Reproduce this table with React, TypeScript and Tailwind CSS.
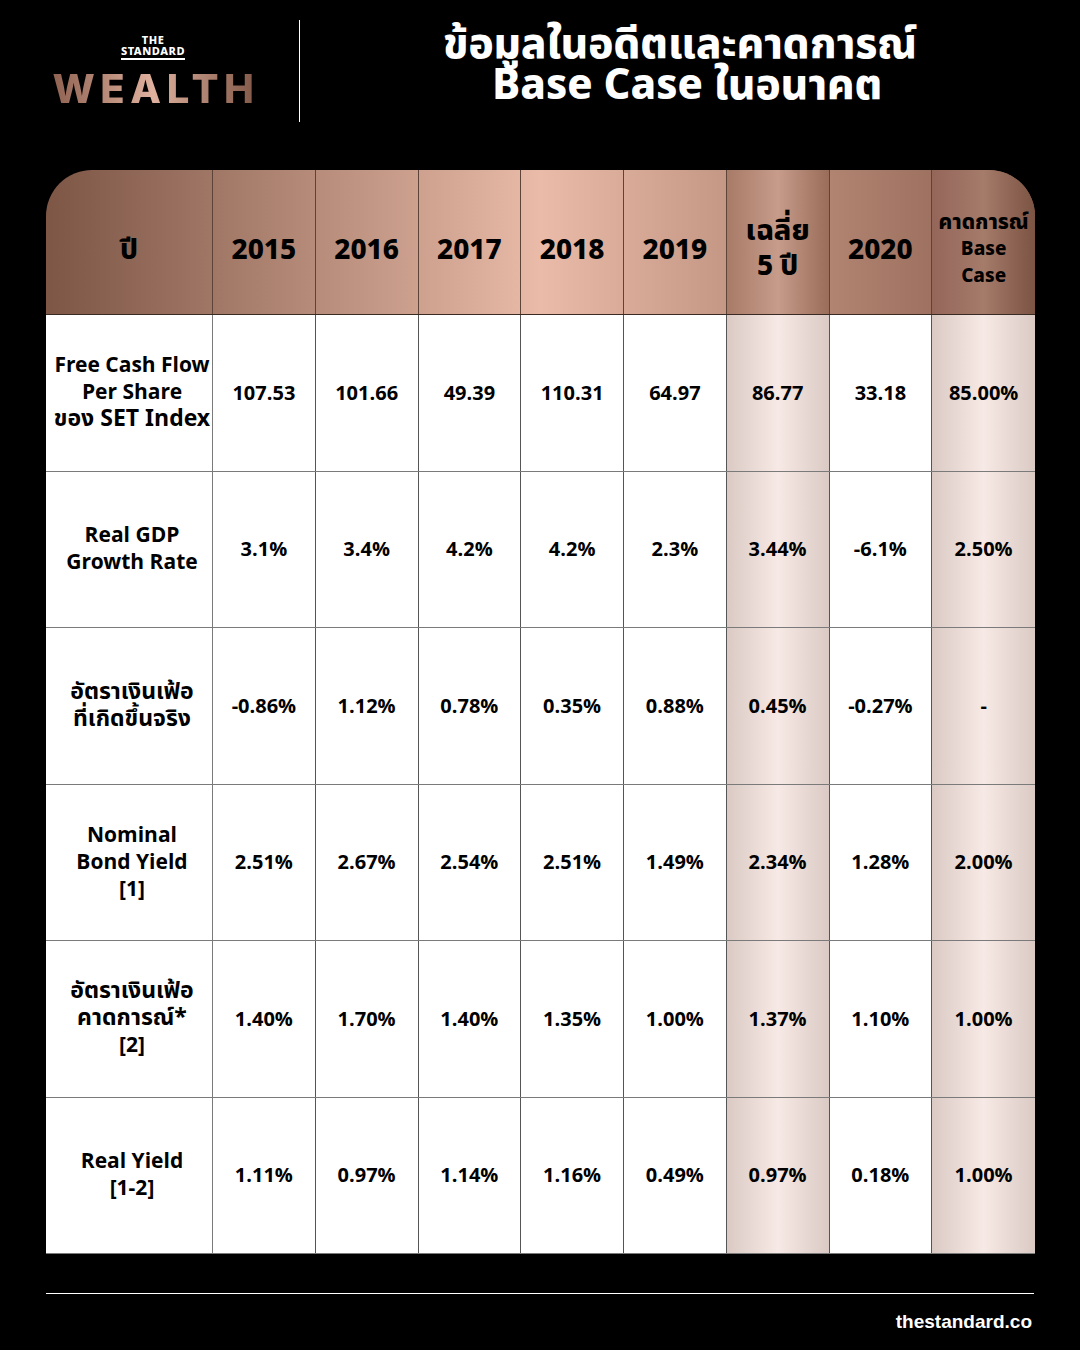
import React from "react"

const font = { fontFamily: '"Noto Sans Thai", "Noto Sans", Inter, sans-serif' }

type Row = { label: string[]; values: string[] }

const years = ["2015", "2016", "2017", "2018", "2019"]

const rows: Row[] = [
  {
    label: ["Free Cash Flow", "Per Share", "ของ SET Index"],
    values: ["107.53", "101.66", "49.39", "110.31", "64.97", "86.77", "33.18", "85.00%"],
  },
  {
    label: ["Real GDP", "Growth Rate"],
    values: ["3.1%", "3.4%", "4.2%", "4.2%", "2.3%", "3.44%", "-6.1%", "2.50%"],
  },
  {
    label: ["อัตราเงินเฟ้อ", "ที่เกิดขึ้นจริง"],
    values: ["-0.86%", "1.12%", "0.78%", "0.35%", "0.88%", "0.45%", "-0.27%", "-"],
  },
  {
    label: ["Nominal", "Bond Yield", "[1]"],
    values: ["2.51%", "2.67%", "2.54%", "2.51%", "1.49%", "2.34%", "1.28%", "2.00%"],
  },
  {
    label: ["อัตราเงินเฟ้อ", "คาดการณ์*", "[2]"],
    values: ["1.40%", "1.70%", "1.40%", "1.35%", "1.00%", "1.37%", "1.10%", "1.00%"],
  },
  {
    label: ["Real Yield", "[1-2]"],
    values: ["1.11%", "0.97%", "1.14%", "1.16%", "0.49%", "0.97%", "0.18%", "1.00%"],
  },
]

const isThai = (s: string) => /^[\u0E00-\u0E7F]/.test(s)

function Logo() {
  return (
    <div className="w-[198px] ml-[54px] flex flex-col items-center pt-[35px]">
      <div className="flex flex-col items-center text-white font-extrabold" style={font}>
        <span className="text-[11px] leading-[11px] tracking-[0.05em]">THE</span>
        <span className="text-[11px] leading-[11px] tracking-[0.05em] pb-[1px] border-b-2 border-white">
          STANDARD
        </span>
      </div>
      <div
        className="mt-[9px] text-[40px] font-extrabold leading-none tracking-[0.14em] pl-[6px] bg-linear-to-r from-[#8a5d4d] via-[#dfb19e] to-[#7f5646] bg-clip-text text-transparent"
        style={{ fontFamily: 'Inter, "Noto Sans", sans-serif' }}
      >
        WEALTH
      </div>
    </div>
  )
}

function HeaderCell({
  children,
  special,
  last,
  pad = "pt-[18px]",
}: {
  children: React.ReactNode
  special?: "avg" | "base"
  last?: boolean
  pad?: string
}) {
  const bg =
    special === "avg"
      ? "bg-linear-to-r from-[#a87a68] via-[#c79c8a] to-[#9a6c5a]"
      : special === "base"
      ? "bg-linear-to-r from-[#94665a] via-[#a57b6a] to-[#7c5444]"
      : ""
  return (
    <div
      className={`flex flex-col items-center justify-center ${pad} text-center text-black font-extrabold leading-[1.2] ${
        last ? "" : "border-r border-[#5e4339]"
      } ${bg}`}
    >
      {children}
    </div>
  )
}

export default function App() {
  return (
    <div className="w-[1080px] h-[1350px] bg-black relative" style={font}>
      {/* top bar */}
      <div className="flex h-[150px]">
        <div className="w-[299px] flex">
          <Logo />
        </div>
        <div className="w-px h-[102px] mt-[20px] bg-white" />
        <div className="flex-1 flex flex-col items-center pt-[25px] pr-[20px] text-white font-extrabold text-[42px] leading-[41px]">
          <span>ข้อมูลในอดีตและคาดการณ์</span>
          <span className="pl-[14px]">Base Case ในอนาคต</span>
        </div>
      </div>

      {/* table */}
      <div className="mx-[46px] mt-[20px] w-[989px] rounded-t-[46px] overflow-hidden">
        <div className="grid grid-cols-[167px_repeat(8,1fr)] h-[145px] bg-linear-to-r from-[#7d5646] via-[#e9bba8] to-[#8b5f4e] border-b border-[#3a2a24]">
          <HeaderCell>
            <span className="text-[28px]">ปี</span>
          </HeaderCell>
          {years.map((y) => (
            <HeaderCell key={y}>
              <span className="text-[28px]">{y}</span>
            </HeaderCell>
          ))}
          <HeaderCell special="avg" pad="pt-[14px]">
            <span className="text-[29px] leading-[36px]">เฉลี่ย</span>
            <span className="text-[28px] leading-[36px]">5 ปี</span>
          </HeaderCell>
          <HeaderCell>
            <span className="text-[28px]">2020</span>
          </HeaderCell>
          <HeaderCell special="base" last pad="pt-[14px]">
            <span className="text-[21px] leading-[27px]">คาดการณ์</span>
            <span className="text-[19px] leading-[27px]">Base</span>
            <span className="text-[19px] leading-[27px]">Case</span>
          </HeaderCell>
        </div>

        {rows.map((r, ri) => (
          <div
            key={ri}
            className="grid grid-cols-[167px_repeat(8,1fr)] h-[156.5px] bg-white border-b border-[#7a7a7a]"
          >
            <div className="flex flex-col items-center justify-center pl-[6px] text-center border-r border-[#7a7a7a] text-black font-bold leading-[27px]">
              {r.label.map((l) => (
                <span key={l} className={isThai(l) ? "text-[23px]" : "text-[21px]"}>
                  {l}
                </span>
              ))}
            </div>
            {r.values.map((v, vi) => {
              const tinted = vi === 5 || vi === 7
              return (
                <div
                  key={vi}
                  className={`flex items-center justify-center pt-[2px] text-black font-bold text-[20px] ${
                    vi === 7 ? "" : "border-r border-[#555]"
                  } ${tinted ? "bg-linear-to-r from-[#dbcac4] via-[#f7e9e5] to-[#dbcac4]" : ""}`}
                >
                  {v}
                </div>
              )
            })}
          </div>
        ))}
      </div>

      {/* footer */}
      <div className="mx-[46px] mt-[39px] border-t border-white pt-[16px] flex justify-end">
        <span
          className="text-white font-bold text-[19px] leading-[24px] pr-[2px]"
          style={{ fontFamily: '"Liberation Sans", Arial, sans-serif' }}
        >
          thestandard.co
        </span>
      </div>
    </div>
  )
}
